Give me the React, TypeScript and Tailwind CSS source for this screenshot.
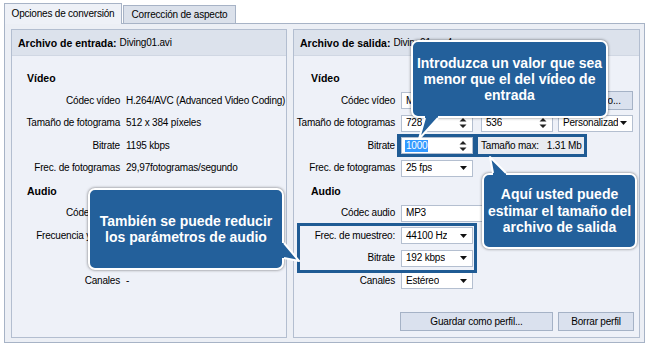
import React from "react";

const Arrow = () => (
  <svg width="7" height="4" viewBox="0 0 7 4" className="shrink-0">
    <path d="M0 0h7L3.5 4z" fill="#111" />
  </svg>
);

const Spin = () => (
  <svg width="8" height="12" viewBox="0 0 8 12" className="shrink-0">
    <path d="M0.5 4.5L4 1l3.5 3.5zM0.5 7.5h7L4 11z" fill="#222" />
  </svg>
);

function Field({ w, children, arrow, spin }: { w: string; children?: React.ReactNode; arrow?: boolean; spin?: boolean }) {
  return (
    <div className={`${w} h-[17px] shrink-0 bg-white border border-[#b4bfd0] flex items-center justify-between gap-[2px] pl-[4px] pr-[5px] overflow-hidden`}>
      <span className="min-w-0 overflow-hidden whitespace-nowrap">{children}</span>
      {arrow && <Arrow />}
      {spin && <Spin />}
    </div>
  );
}

function Row({ label, col, children }: { label: string; col: string; children?: React.ReactNode }) {
  return (
    <div className="flex items-center h-[22.5px] shrink-0">
      <div className={`${col} shrink-0 text-right pr-[6px] whitespace-nowrap`}>{label}</div>
      {children}
    </div>
  );
}

function Section({ title, pad }: { title: string; pad: string }) {
  return (
    <div className={`flex items-center h-[22.5px] shrink-0 ${pad} font-bold text-[10.5px] tracking-normal`}>{title}</div>
  );
}

function Header({ title, file }: { title: string; file: string }) {
  return (
    <div className="h-[26px] shrink-0 bg-[#dce2ec] border-b border-[#d0d7e3] flex items-center pl-[6px] whitespace-nowrap">
      <span className="font-bold text-[10.5px] tracking-normal">{title}</span>
      <span className="ml-[3px]">{file}</span>
    </div>
  );
}

export default function App() {
  const left = "w-[114px]";
  const right = "w-[107px]";

  return (
    <div className="relative w-[647px] h-[348px] bg-white overflow-hidden font-['Liberation_Sans',Arial,sans-serif] text-[10px] tracking-[-0.2px] leading-[12px] text-black">
      {/* tabs */}
      <div className="flex items-end h-[23px] pl-[4px]">
        <div className="relative z-10 h-[21px] w-[118px] -mb-px bg-[#eef1f7] border border-b-0 border-[#a7b3c6] flex items-center justify-center">
          Opciones de conversión
        </div>
        <div className="h-[18px] w-[113px] ml-px bg-[#dbe1eb] border border-b-0 border-[#a7b3c6] flex items-center justify-center">
          Corrección de aspecto
        </div>
      </div>

      <div className="ml-[4px] w-[641px] h-[320px] border border-[#a7b3c6] bg-[#eceff5] flex gap-[6px] pt-[5px] pl-[6px]">
        {/* input file */}
        <div className="w-[276px] h-[309px] border border-[#b3bed0] bg-[#eef1f8] flex flex-col">
          <Header title="Archivo de entrada:" file="Diving01.avi" />
          <div className="flex-1 flex flex-col pt-[10.75px]">
            <Section title="Vídeo" pad="pl-[15px]" />
            <Row label="Códec vídeo" col={left}>H.264/AVC (Advanced Video Coding)</Row>
            <Row label="Tamaño de fotograma" col={left}>512 x 384 píxeles</Row>
            <Row label="Bitrate" col={left}>1195 kbps</Row>
            <Row label="Frec. de fotogramas" col={left}>29,97fotogramas/segundo</Row>
            <Section title="Audio" pad="pl-[15px]" />
            <Row label="Códec audio" col={left} />
            <Row label="Frecuencia y bitrate" col={left} />
            <Row label="" col={left} />
            <Row label="Canales" col={left}>-</Row>
          </div>
        </div>

        {/* output file */}
        <div className="w-[347px] h-[309px] border border-[#b3bed0] bg-[#eef1f8] flex flex-col">
          <Header title="Archivo de salida:" file="Diving01.mp4" />
          <div className="flex-1 flex flex-col pt-[10.75px]">
            <Section title="Vídeo" pad="pl-[17px]" />
            <Row label="Códec vídeo" col={right}>
              <Field w="w-[152px]" arrow>MPEG-4</Field>
              <button className="ml-[5px] w-[75px] h-[19px] bg-[#dae1ee] border border-[#a5b2c6] text-[10px]">Avanzado...</button>
            </Row>
            <Row label="Tamaño de fotogramas" col={right}>
              <Field w="w-[72px]" spin>728</Field>
              <div className="w-[8px]" />
              <Field w="w-[72px]" spin>536</Field>
              <div className="w-[5px]" />
              <Field w="w-[75px]" arrow>Personalizado</Field>
            </Row>
            <Row label="Bitrate" col={right}>
              <div className="-ml-[4px] flex gap-[5px] bg-[#1f5b94] pl-[4px] pr-[3px] py-[3px]">
                <div className="w-[72px] h-[17px] bg-white border border-[#b4bfd0] flex items-center justify-between pl-[3px] pr-[5px]">
                  <span className="bg-[#3399ff] text-white px-px">1000</span>
                  <Spin />
                </div>
                <div className="w-[106px] h-[17px] bg-[#e8ebf1] flex items-center pl-[3px] whitespace-nowrap">
                  <span>Tamaño max:</span>
                  <span className="ml-[8px]">1.31 Mb</span>
                </div>
              </div>
            </Row>
            <Row label="Frec. de fotogramas" col={right}>
              <Field w="w-[72px]" arrow>25 fps</Field>
            </Row>
            <Section title="Audio" pad="pl-[17px]" />
            <Row label="Códec audio" col={right}>
              <Field w="w-[152px]" arrow>MP3</Field>
            </Row>
            <Row label="Frec. de muestreo:" col={right}>
              <Field w="w-[72px]" arrow>44100 Hz</Field>
            </Row>
            <Row label="Bitrate" col={right}>
              <Field w="w-[72px]" arrow>192 kbps</Field>
            </Row>
            <Row label="Canales" col={right}>
              <Field w="w-[72px]" arrow>Estéreo</Field>
            </Row>
            <div className="mt-auto flex justify-end gap-[5px] pr-[5px] pb-[6px]">
              <button className="w-[153px] h-[19px] bg-[#dae1ee] border border-[#a5b2c6] text-[10px]">Guardar como perfil...</button>
              <button className="w-[76px] h-[19px] bg-[#dae1ee] border border-[#a5b2c6] text-[10px]">Borrar perfil</button>
            </div>
          </div>
        </div>
      </div>

      {/* highlight around audio settings */}
      <div className="absolute left-[297px] top-[223px] w-[180px] h-[50px] border-[3px] border-[#1f5b94]" />

      {/* callouts */}
      <div className="absolute left-[411px] top-[40px] w-[197px] h-[78px] rounded-[7px] border-2 border-white bg-[#23609b] shadow-[0_0_3px_rgba(0,0,0,0.55)] flex items-center justify-center text-center text-white font-bold text-[14px] leading-[16px] tracking-normal">
        <p>Introduzca un valor que sea<br />menor que el del vídeo de<br />entrada</p>
      </div>
      <svg className="absolute left-[413px] top-[114px]" width="28" height="28" viewBox="0 0 28 28">
        <path d="M12 0H25V4L6 25L12 4Z" fill="#23609b" />
        <polyline points="12,4 6,25 25,4" fill="none" stroke="#fff" strokeWidth="2" strokeLinejoin="round" />
      </svg>

      <div className="absolute left-[482px] top-[173px] w-[155px] h-[76px] rounded-[7px] border-2 border-white bg-[#23609b] shadow-[0_0_3px_rgba(0,0,0,0.55)] flex items-center justify-center text-center text-white font-bold text-[14px] leading-[16.5px] tracking-normal">
        <p>Aquí usted puede<br />estimar el tamaño del<br />archivo de salida</p>
      </div>
      <svg className="absolute left-[486px] top-[153px]" width="24" height="26" viewBox="0 0 24 26">
        <path d="M4 4L20 20V24H7V20Z" fill="#23609b" />
        <polyline points="7,20 4,4 20,20" fill="none" stroke="#fff" strokeWidth="2" strokeLinejoin="round" />
      </svg>

      <div className="absolute left-[88px] top-[188px] w-[196px] h-[82px] rounded-[7px] border-2 border-white bg-[#23609b] shadow-[0_0_3px_rgba(0,0,0,0.55)] flex items-center justify-center text-center text-white font-bold text-[14px] leading-[16px] tracking-normal">
        <p>También se puede reducir<br />los parámetros de audio</p>
      </div>
      <svg className="absolute left-[278px] top-[240px]" width="26" height="24" viewBox="0 0 26 24">
        <path d="M1 3H6L21 21L6 18H1Z" fill="#23609b" />
        <polyline points="6,3 21,21 6,18" fill="none" stroke="#fff" strokeWidth="2" strokeLinejoin="round" />
      </svg>
    </div>
  );
}
